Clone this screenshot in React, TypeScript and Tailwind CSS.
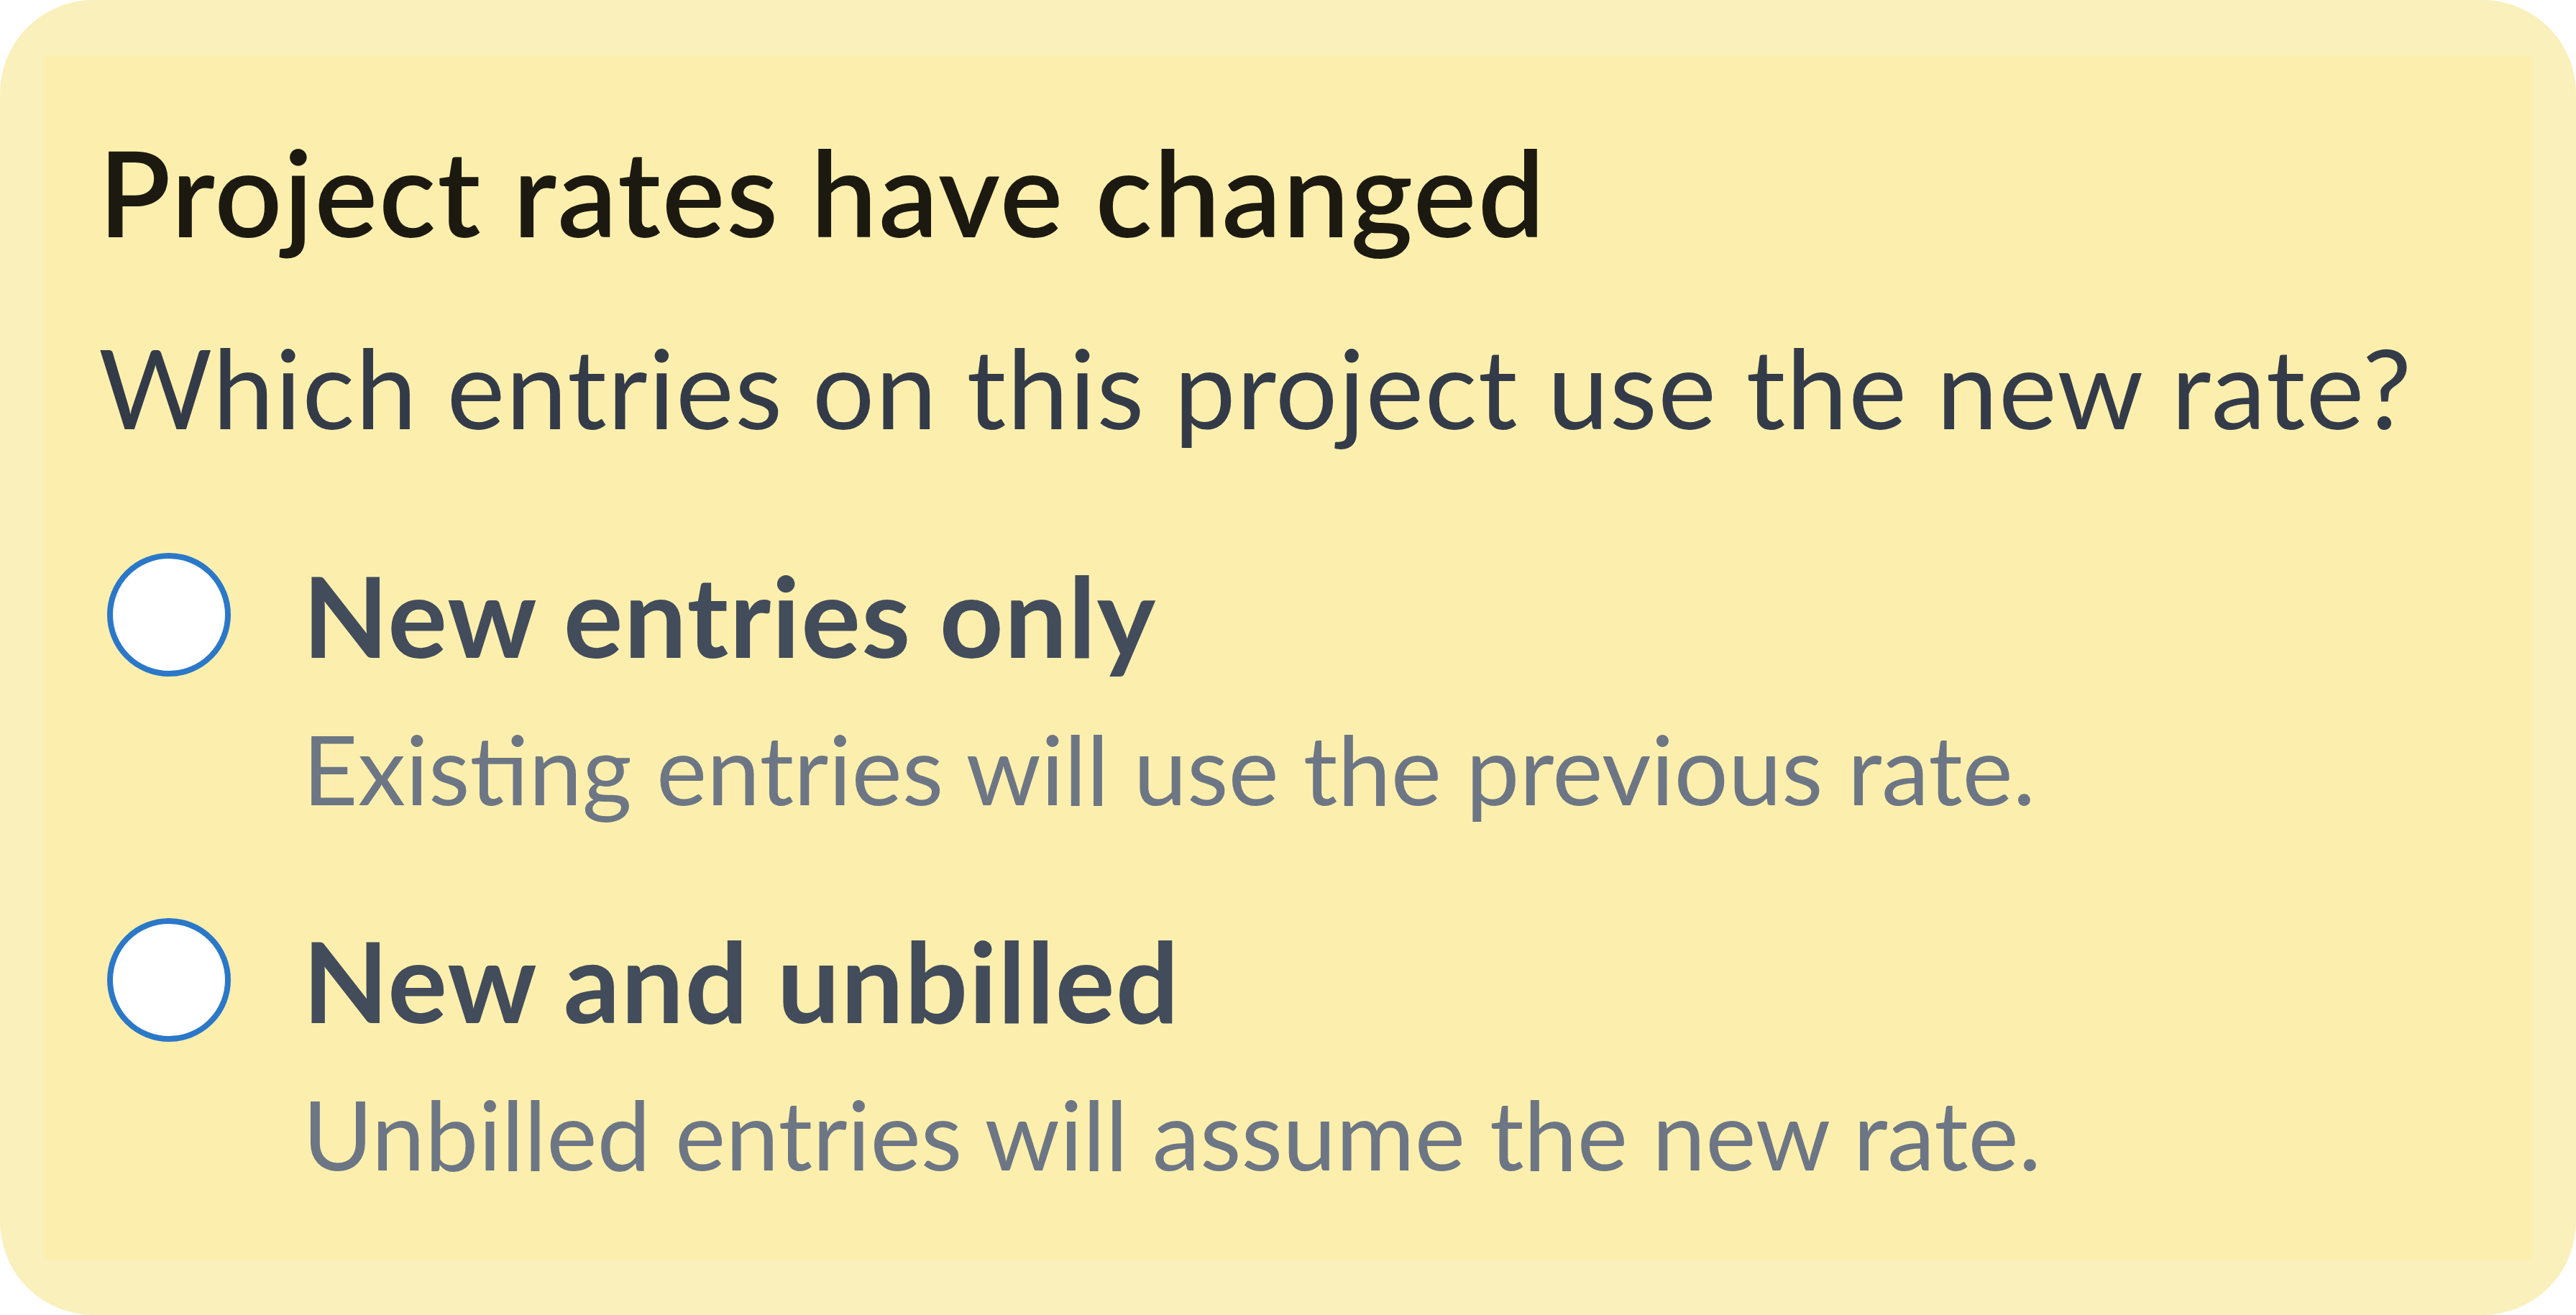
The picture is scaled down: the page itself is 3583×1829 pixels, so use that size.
import React from 'react';

const options = [
  {
    id: 'new',
    title: 'New entries only',
    description: 'Existing entries will use the previous rate.',
  },
  {
    id: 'unbilled',
    title: 'New and unbilled',
    description: 'Unbilled entries will assume the new rate.',
  },
];

const RadioOption: React.FC<{ title: string; description: string; first?: boolean }> = ({
  title,
  description,
  first,
}) => (
  <div className={first ? 'mt-[131px]' : 'mt-[122px]'}>
    <div className="flex items-center">
      <span className="ml-[12px] h-[172px] w-[172px] shrink-0 rounded-full border-[8px] border-[#2b78c9] bg-white" />
      <span className="ml-[100px] text-[155px] leading-[1.2] font-bold tracking-[1.3px] text-[#424c5b]">
        {title}
      </span>
    </div>
    <p className="mt-[41px] pl-[284px] text-[133px] leading-[1.2] text-[#6d7684]">{description}</p>
  </div>
);

export default function App() {
  return (
    <div className="h-screen w-full bg-white font-['Lato',sans-serif]">
      <div className="h-full w-full rounded-[130px] bg-[#f9f0bb] px-[61px] py-[77px]">
        <div className="h-full w-full bg-[#fcefad] pt-[90px] pl-[76px]">
          <h2 className="text-[165px] leading-[1.2] font-semibold tracking-[2px] text-[#1c1a10]">
            Project rates have changed
          </h2>
          <p className="mt-[82px] text-[153px] leading-[1.2] tracking-[1.2px] text-[#343b48]">
            Which entries on this project use the new rate?
          </p>
          {options.map((o, i) => (
            <RadioOption key={o.id} title={o.title} description={o.description} first={i === 0} />
          ))}
        </div>
      </div>
    </div>
  );
}
